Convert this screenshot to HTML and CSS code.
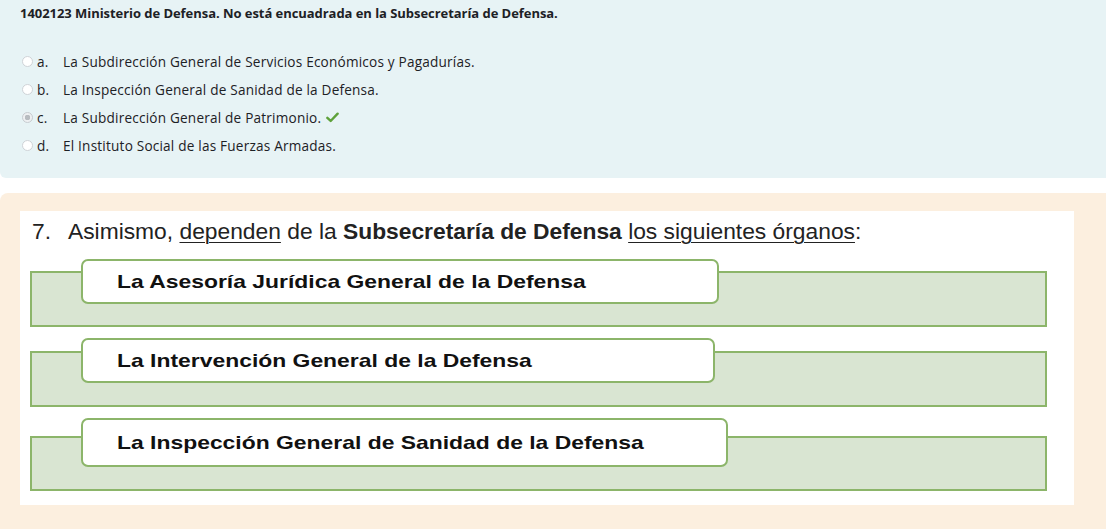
FILE: index.html
```html
<!DOCTYPE html>
<html lang="es">
<head>
<meta charset="utf-8">
<link rel="stylesheet" href="styles.css">
</head>
<body>
<section class="quiz">
  <p class="qtext">1402123 Ministerio de Defensa. No está encuadrada en la Subsecretaría de Defensa.</p>
  <div class="answers">
    <div class="opt"><span class="radio"></span><span class="letter">a.</span><span class="atext">La Subdirección General de Servicios Económicos y Pagadurías.</span></div>
    <div class="opt"><span class="radio"></span><span class="letter">b.</span><span class="atext">La Inspección General de Sanidad de la Defensa.</span></div>
    <div class="opt"><span class="radio checked"></span><span class="letter">c.</span><span class="atext">La Subdirección General de Patrimonio.</span>
      <svg class="tick" viewBox="0 0 14 12" width="13" height="11"><path d="M1.4 6.4 L5 9.8 L12.6 1.8" fill="none" stroke="#5ea13a" stroke-width="2.6" stroke-linecap="round" stroke-linejoin="round"/></svg>
    </div>
    <div class="opt"><span class="radio"></span><span class="letter">d.</span><span class="atext">El Instituto Social de las Fuerzas Armadas.</span></div>
  </div>
</section>
<section class="feedback">
  <div class="slide">
    <p class="heading"><span class="num">7.</span>Asimismo, <u>dependen</u> de la <b>Subsecretaría de Defensa</b> <u>los siguientes órganos</u>:</p>
    <div class="item">
      <div class="band"></div>
      <div class="label w1"><span>La Asesoría Jurídica General de la Defensa</span></div>
    </div>
    <div class="item i2">
      <div class="band"></div>
      <div class="label w2"><span>La Intervención General de la Defensa</span></div>
    </div>
    <div class="item i3">
      <div class="band"></div>
      <div class="label w3"><span>La Inspección General de Sanidad de la Defensa</span></div>
    </div>
  </div>
</section>
</body>
</html>
```

FILE: styles.css
```css
html, body {
  margin: 0;
  padding: 0;
  background: #ffffff;
}
body {
  width: 1106px;
  height: 529px;
  overflow: hidden;
  font-family: "Open Sans", Lato, sans-serif;
  color: #1d2125;
}
.quiz {
  background: #e7f3f5;
  height: 178px;
  box-sizing: border-box;
  border-radius: 0 0 0 6px;
  padding: 5px 0 0 20px;
}
.qtext {
  margin: 0;
  font-size: 13px;
  font-weight: 700;
  line-height: 17px;
  letter-spacing: -0.05px;
}
.answers {
  margin-top: 29px;
  display: flex;
  flex-direction: column;
  gap: 8px;
}
.opt {
  display: flex;
  align-items: center;
  height: 20px;
  font-size: 13.6px;
  letter-spacing: 0.2px;
}
.radio {
  width: 11px;
  height: 11px;
  box-sizing: border-box;
  border: 1px solid #cfd3d7;
  border-radius: 50%;
  background: #fff;
  margin: 0 0 0 2px;
}
.radio.checked {
  border-color: #c8ccd0;
  background: radial-gradient(circle, #b8bcc0 0 2.6px, #eef0f2 3px);
}
.letter {
  width: 30px;
  padding-left: 4px;
  box-sizing: border-box;
}
.tick {
  margin-left: 5px;
}
.feedback {
  margin-top: 15px;
  background: #fcefdf;
  border-radius: 8px 0 0 0;
  height: 336px;
  padding: 18px 0 0 20px;
  box-sizing: border-box;
}
.slide {
  width: 1054px;
  height: 294px;
  background: #ffffff;
  box-sizing: border-box;
  padding-top: 6px;
  font-family: "Liberation Sans", Arial, sans-serif;
  color: #1a1a1a;
}
.heading {
  margin: 0 0 0 12px;
  font-size: 22.8px;
  line-height: 28px;
  color: #222;
}
.heading .num {
  display: inline-block;
  width: 36px;
}
.heading u {
  text-decoration-thickness: 1px;
  text-underline-offset: 3px;
}
.item {
  display: grid;
  margin: 14px 0 0 10px;
}
.item.i2 { margin-top: 11px; }
.item.i3 { margin-top: 11px; }
.band, .label {
  grid-area: 1 / 1;
}
.band {
  width: 1017px;
  height: 56px;
  margin-top: 12px;
  box-sizing: border-box;
  background: #d9e5d2;
  border: 2px solid #8cb56a;
}
.i2 .band { margin-top: 13px; }
.i3 .band { margin-top: 18px; height: 55px; }
.label {
  margin-left: 51px;
  height: 45px;
  box-sizing: border-box;
  background: #ffffff;
  border: 2px solid #8cb56a;
  border-radius: 7px;
  align-self: start;
  z-index: 1;
  font-weight: 700;
  font-size: 19px;
  line-height: 41px;
  padding-left: 34px;
  color: #111;
}
.label span {
  display: inline-block;
  transform: scaleX(1.205);
  transform-origin: left center;
}
.i3 .label { height: 49px; line-height: 45px; }
.w1 { width: 638px; }
.w2 { width: 634px; }
.w3 { width: 647px; }
```
